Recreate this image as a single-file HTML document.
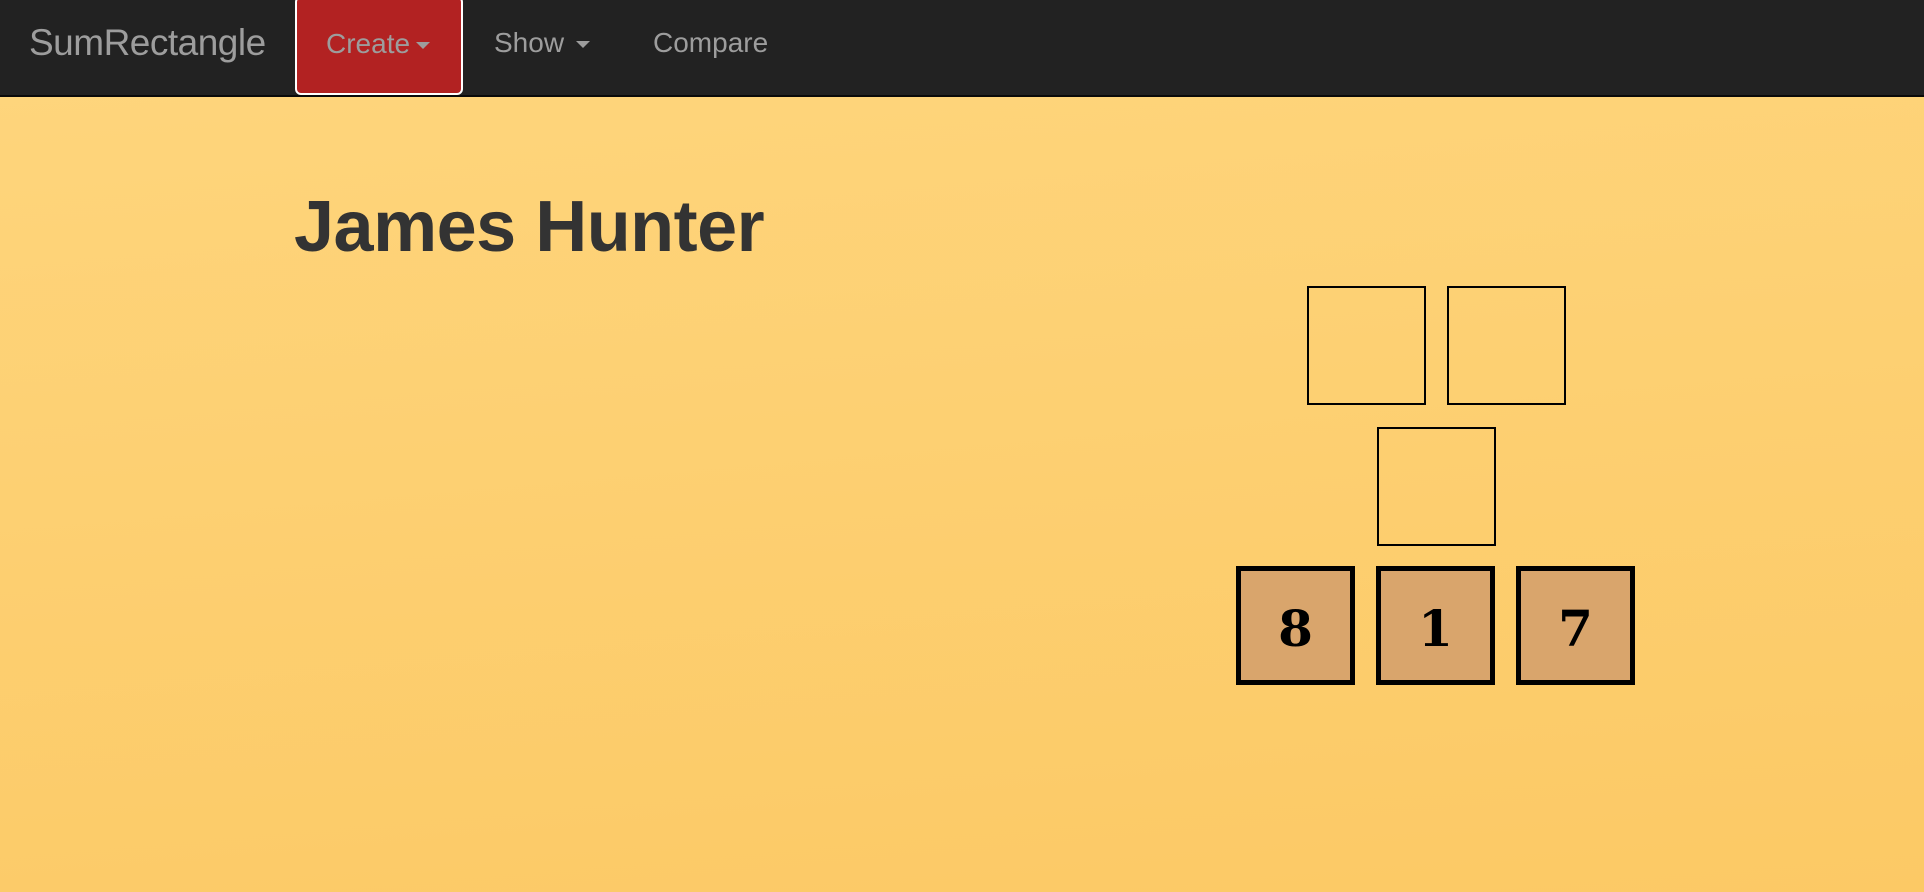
<!DOCTYPE html>
<html><head><meta charset="utf-8"><style>
*{margin:0;padding:0;box-sizing:border-box}
html,body{width:1924px;height:892px;overflow:hidden}
body{background:linear-gradient(175deg,#fed67e 0%,#fcc965 100%);font-family:"Liberation Sans",sans-serif;position:relative}
.nav{position:absolute;left:0;top:0;width:1924px;height:97px;background:#222;border-bottom:2px solid #0a0a0a}
.brand{position:absolute;left:29px;top:22px;font-size:37px;color:#9d9d9d;letter-spacing:-0.5px}
.create{position:absolute;left:295px;top:-4px;width:168px;height:99px;background:#b22222;border:2px solid #fff;border-radius:6px;}
.link{position:absolute;font-size:28px;color:#9d9d9d;top:27px}
.caret{display:inline-block;width:0;height:0;border-left:7px solid transparent;border-right:7px solid transparent;border-top:7px solid #9d9d9d;vertical-align:middle;margin-left:6px}
h1{position:absolute;left:294px;top:186px;font-size:72px;font-weight:bold;color:#333;letter-spacing:-0.5px}
.b{position:absolute;width:119px;height:119px;border:2px solid #000}
.f{border:5px solid #000;background:#d9a56c;font-family:"DejaVu Serif",serif;font-weight:900;font-size:50px;text-align:center;line-height:116px;color:#000}
</style></head><body>
<div class="nav">
<div class="brand">SumRectangle</div>
<div class="create"></div>
<div class="link" style="left:326px;top:28px">Create<span class="caret"></span></div>
<div class="link" style="left:494px">Show<span class="caret" style="margin-left:12px"></span></div>
<div class="link" style="left:653px">Compare</div>
</div>
<h1>James Hunter</h1>
<div class="b" style="left:1307px;top:286px"></div>
<div class="b" style="left:1447px;top:286px"></div>
<div class="b" style="left:1377px;top:427px"></div>
<div class="b f" style="left:1236px;top:566px">8</div>
<div class="b f" style="left:1376px;top:566px">1</div>
<div class="b f" style="left:1516px;top:566px">7</div>
</body></html>
